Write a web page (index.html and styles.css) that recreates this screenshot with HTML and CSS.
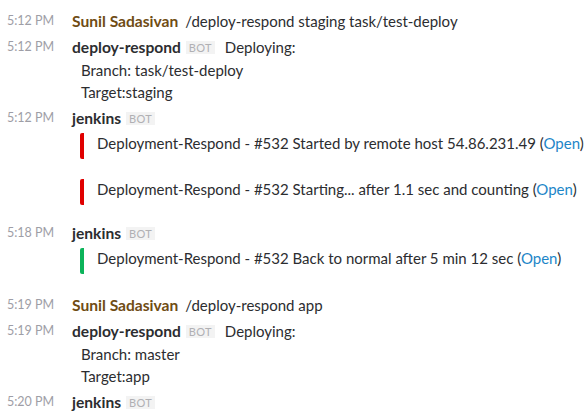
FILE: index.html
```html
<!DOCTYPE html>
<html>
<head>
<meta charset="utf-8">
<link rel="stylesheet" href="styles.css">
</head>
<body>
<div class="feed">
  <div class="msg">
    <div class="ts">5:12 PM</div>
    <div class="content">
      <div class="head"><span class="name user">Sunil Sadasivan</span><span class="text">/deploy-respond staging task/test-deploy</span></div>
    </div>
  </div>
  <div class="msg">
    <div class="ts">5:12 PM</div>
    <div class="content">
      <div class="head"><span class="name">deploy-respond</span><span class="bot">BOT</span><span class="text wide">Deploying:</span></div>
      <div class="body">
        <div class="line">Branch: task/test-deploy</div>
        <div class="line">Target:staging</div>
      </div>
    </div>
  </div>
  <div class="msg">
    <div class="ts">5:12 PM</div>
    <div class="content">
      <div class="head"><span class="name">jenkins</span><span class="bot">BOT</span></div>
      <div class="attachments">
        <div class="att danger">Deployment-Respond - #532 Started by remote host 54.86.231.49 (<a class="link">Open</a>)</div>
        <div class="att danger">Deployment-Respond - #532 Starting... after 1.1 sec and counting (<a class="link">Open</a>)</div>
      </div>
    </div>
  </div>
  <div class="msg">
    <div class="ts">5:18 PM</div>
    <div class="content">
      <div class="head"><span class="name">jenkins</span><span class="bot">BOT</span></div>
      <div class="attachments spaced">
        <div class="att good">Deployment-Respond - #532 Back to normal after 5 min 12 sec (<a class="link">Open</a>)</div>
      </div>
    </div>
  </div>
  <div class="msg">
    <div class="ts">5:19 PM</div>
    <div class="content">
      <div class="head"><span class="name user">Sunil Sadasivan</span><span class="text">/deploy-respond app</span></div>
    </div>
  </div>
  <div class="msg">
    <div class="ts">5:19 PM</div>
    <div class="content">
      <div class="head"><span class="name">deploy-respond</span><span class="bot">BOT</span><span class="text wide">Deploying:</span></div>
      <div class="body">
        <div class="line">Branch: master</div>
        <div class="line">Target:app</div>
      </div>
    </div>
  </div>
  <div class="msg">
    <div class="ts">5:20 PM</div>
    <div class="content">
      <div class="head"><span class="name">jenkins</span><span class="bot">BOT</span></div>
    </div>
  </div>
</div>
</body>
</html>
```

FILE: styles.css
```css
html, body {
  margin: 0;
  padding: 0;
  background: #ffffff;
}
body {
  font-family: Lato, "Noto Sans", sans-serif;
  color: #2c2d30;
  font-size: 15px;
}
.feed {
  padding: 8px 0 0 7px;
  display: flex;
  flex-direction: column;
}
.msg {
  display: flex;
  padding: 2px 0;
}
.ts {
  width: 65px;
  flex: none;
  font-size: 12.5px;
  color: #9e9ea6;
  line-height: 22px;
}
.content {
  flex: 1;
  min-width: 0;
}
.head {
  display: flex;
  align-items: center;
  height: 22px;
  line-height: 22px;
  white-space: nowrap;
}
.name {
  font-weight: 700;
  font-size: 15.6px;
  color: #2c2d30;
}
.name.user {
  color: #6f4c14;
}
.text {
  margin-left: 7px;
}
.text.wide {
  margin-left: 10px;
}
.bot {
  margin-left: 5px;
  font-size: 11px;
  line-height: 13px;
  height: 13px;
  padding: 0 3px;
  background: #f3f3f3;
  color: #b0b0b3;
  letter-spacing: 0.3px;
}
.body {
  margin-top: 1px;
  padding-left: 9px;
}
.line {
  line-height: 22px;
}
.attachments {
  display: flex;
  flex-direction: column;
  gap: 20px;
  margin: 4px 0 13px 8px;
}
.attachments.spaced {
  margin-bottom: 16px;
}
.att {
  border-left: 4px solid #e00000;
  border-radius: 2px;
  padding: 0 0 6px 13px;
  line-height: 20px;
  white-space: nowrap;
}
.att.good {
  border-left-color: #0cb45a;
}
.link {
  color: #1d86c8;
  text-decoration: none;
}
```
